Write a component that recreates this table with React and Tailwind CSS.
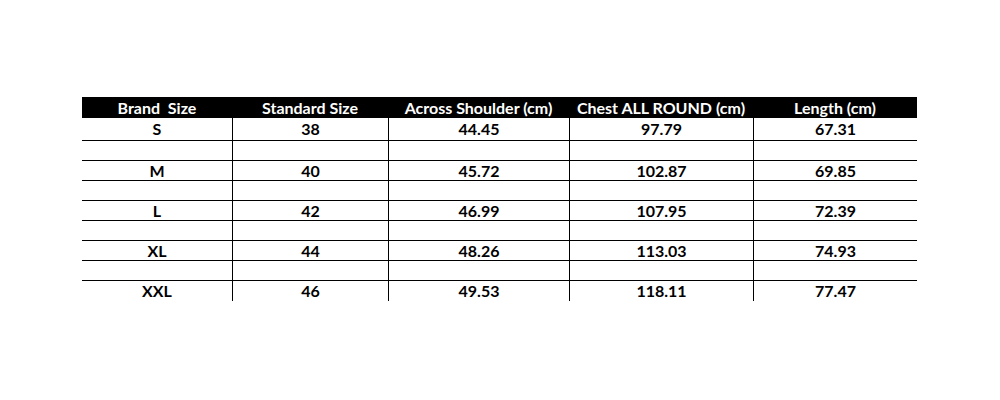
const headers = ['Brand  Size', 'Standard Size', 'Across Shoulder (cm)', 'Chest ALL ROUND (cm)', 'Length (cm)'];

const rows = [
  ['S', '38', '44.45', '97.79', '67.31'],
  null,
  ['M', '40', '45.72', '102.87', '69.85'],
  null,
  ['L', '42', '46.99', '107.95', '72.39'],
  null,
  ['XL', '44', '48.26', '113.03', '74.93'],
  null,
  ['XXL', '46', '49.53', '118.11', '77.47'],
];

const widths = ['w-[150px]', 'w-[156px]', 'w-[181px]', 'w-[184px]', 'w-[164px]'];

export default function App() {
  return (
    <div className="w-[1000px] h-[400px] bg-white pt-[97px] pl-[82px]" style={{ fontFamily: 'Lato, "Liberation Sans", sans-serif' }}>
      <div className="w-[835px] text-[16px] font-bold text-black">
        <div className="flex h-[21px] bg-black text-white">
          {headers.map((h, i) => (
            <div key={i} className={`${widths[i]} flex items-center justify-center whitespace-pre leading-none`}>
              {h}
            </div>
          ))}
        </div>
        {rows.map((r, ri) => (
          <div
            key={ri}
            className={`flex ${ri === 0 ? 'h-[23px]' : 'h-[20px]'} ${ri < rows.length - 1 ? 'border-b border-black' : ''}`}
          >
            {widths.map((w, ci) => (
              <div
                key={ci}
                className={`${w} flex items-center justify-center leading-none ${ci > 0 ? 'border-l border-black' : ''}`}
              >
                {r ? r[ci] : ''}
              </div>
            ))}
          </div>
        ))}
      </div>
    </div>
  );
}
